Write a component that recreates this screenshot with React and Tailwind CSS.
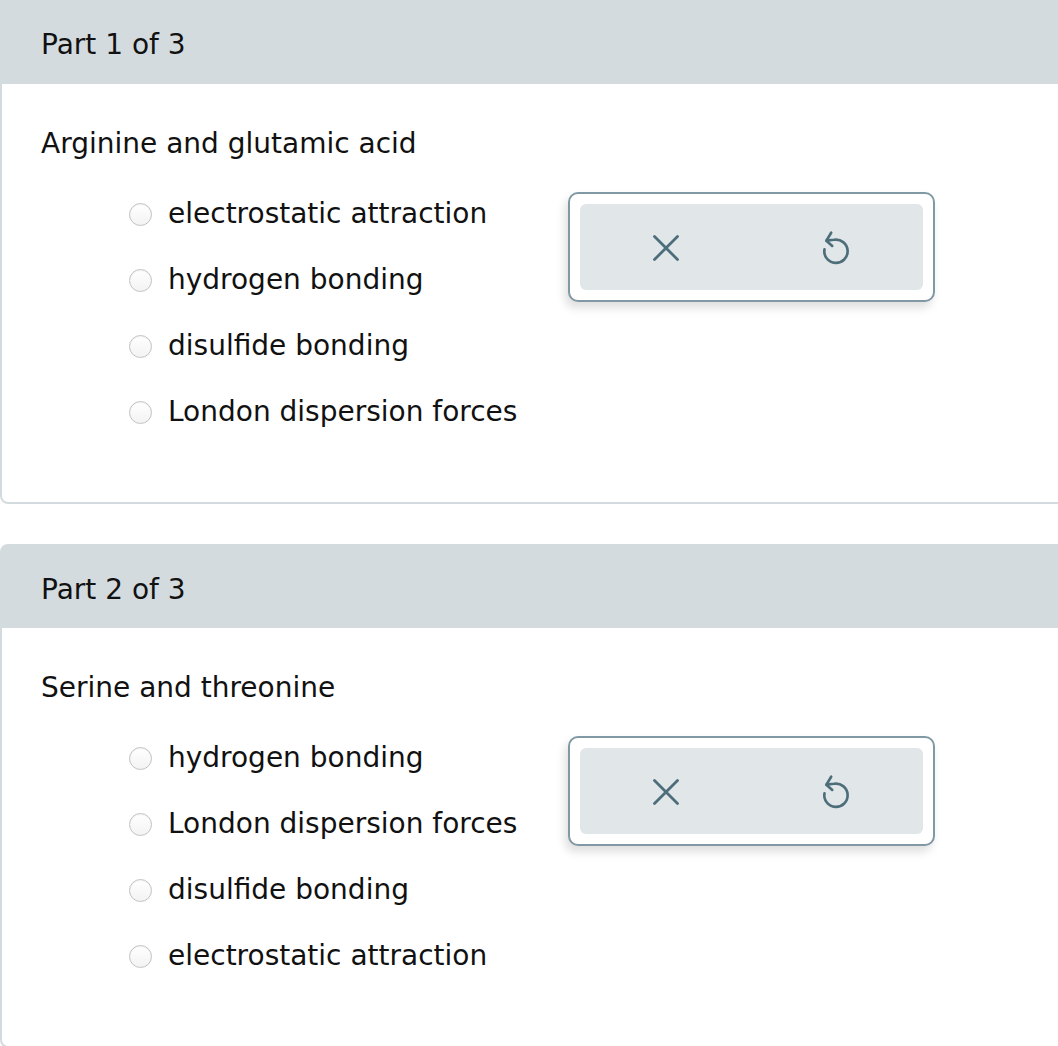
const PARTS = [
  {
    label: 'Part 1 of 3',
    question: 'Arginine and glutamic acid',
    options: ['electrostatic attraction', 'hydrogen bonding', 'disulfide bonding', 'London dispersion forces'],
    first: true,
  },
  {
    label: 'Part 2 of 3',
    question: 'Serine and threonine',
    options: ['hydrogen bonding', 'London dispersion forces', 'disulfide bonding', 'electrostatic attraction'],
  },
];

function XIcon() {
  return (
    <svg width="26" height="26" viewBox="0 0 26 26" fill="none" stroke="#4d6d7b" strokeWidth="2.8" strokeLinecap="round">
      <path d="M1.5 1.5 L24.5 24.5 M24.5 1.5 L1.5 24.5" />
    </svg>
  );
}

function UndoIcon() {
  return (
    <svg width="30" height="36" viewBox="0 0 28 34" fill="none" stroke="#4d6d7b" strokeWidth="2.5" strokeLinecap="round" strokeLinejoin="round">
      <path d="M2.2 19.1 A11 11 0 1 0 11.1 10.2 L4 11" />
      <path d="M8.5 3.5 L4 11 L9.5 16" />
    </svg>
  );
}

function Radio() {
  return (
    <span className="w-[23px] h-[23px] rounded-full border border-[#c2c2c2] bg-gradient-to-b from-[#ffffff] to-[#f3f3f3] shadow-[inset_0_1px_1px_rgba(0,0,0,0.05)] shrink-0" />
  );
}

function Part({ part }) {
  return (
    <div
      className={`w-[1080px] border-2 border-[#d3dbdf] bg-white ${part.first ? 'border-t-0 rounded-b-[8px]' : 'rounded-[8px]'}`}
    >
      <div className={`bg-[#d3dbdf] flex items-center pl-[39px] pt-[5px] ${part.first ? 'h-[84px]' : 'h-[82px]'}`}>
        <span className="text-[28px] text-[#111]">{part.label}</span>
      </div>
      <div className="pl-[39px] pt-[43px] pb-[57px]">
        <p className="text-[28px] leading-[34px] text-[#111]">{part.question}</p>
        <div className="flex mt-[20px]">
          <div className="w-[527px] pl-[88px] flex flex-col">
            {part.options.map((o) => (
              <label key={o} className="h-[66px] flex items-center gap-[16px] cursor-pointer">
                <Radio />
                <span className="text-[28px] text-[#111]">{o}</span>
              </label>
            ))}
          </div>
          <div className="mt-[11px] w-[367px] h-[110px] border-2 border-[#8199a4] rounded-[10px] p-[10px] bg-white shadow-[-3px_6px_10px_rgba(0,0,0,0.13)]">
            <div className="h-full bg-[#e1e6e9] rounded-[6px] flex">
              <button className="flex-1 flex items-center justify-center pt-[2px]">
                <XIcon />
              </button>
              <button className="flex-1 flex items-center justify-center">
                <UndoIcon />
              </button>
            </div>
          </div>
        </div>
      </div>
    </div>
  );
}

export default function App() {
  return (
    <div className="w-[1058px] h-[1046px] overflow-hidden bg-white font-['DejaVu_Sans',Verdana,sans-serif] flex flex-col gap-[40px]">
      {PARTS.map((p) => (
        <Part key={p.label} part={p} />
      ))}
    </div>
  );
}
